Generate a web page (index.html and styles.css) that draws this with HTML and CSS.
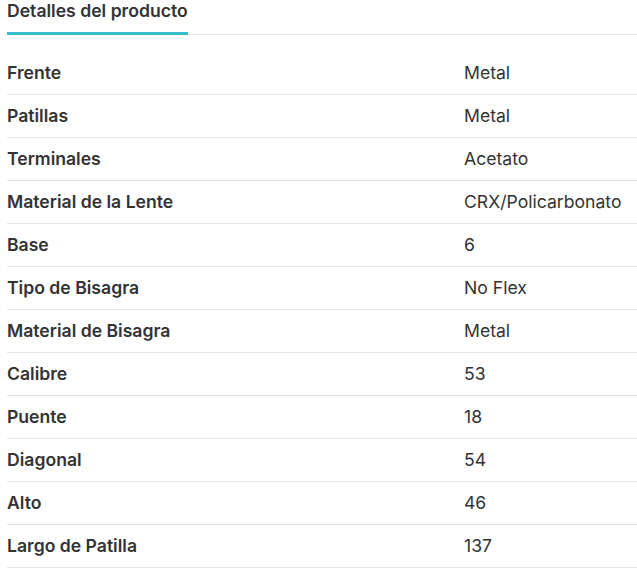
FILE: index.html
```html
<!DOCTYPE html>
<html lang="es">
<head>
<meta charset="utf-8">
<title>Detalles del producto</title>
<link rel="stylesheet" href="styles.css">
</head>
<body>
<div class="details">
  <div class="tabs">
    <div class="tab active">Detalles del producto</div>
  </div>
  <div class="specs">
    <div class="row"><div class="label">Frente</div><div class="value">Metal</div></div>
    <div class="row"><div class="label">Patillas</div><div class="value">Metal</div></div>
    <div class="row"><div class="label">Terminales</div><div class="value">Acetato</div></div>
    <div class="row"><div class="label">Material de la Lente</div><div class="value">CRX/Policarbonato</div></div>
    <div class="row"><div class="label">Base</div><div class="value">6</div></div>
    <div class="row"><div class="label">Tipo de Bisagra</div><div class="value">No Flex</div></div>
    <div class="row"><div class="label">Material de Bisagra</div><div class="value">Metal</div></div>
    <div class="row"><div class="label">Calibre</div><div class="value">53</div></div>
    <div class="row"><div class="label">Puente</div><div class="value">18</div></div>
    <div class="row"><div class="label">Diagonal</div><div class="value">54</div></div>
    <div class="row"><div class="label">Alto</div><div class="value">46</div></div>
    <div class="row"><div class="label">Largo de Patilla</div><div class="value">137</div></div>
  </div>
</div>
</body>
</html>
```
FILE: styles.css
```css
html, body {
  margin: 0;
  padding: 0;
  background: #ffffff;
}
body {
  font-family: Inter, "Noto Sans", sans-serif;
  color: #333333;
}
.details {
  padding-left: 7px;
}
.tabs {
  display: flex;
  border-bottom: 1px solid #e6e6e6;
  margin-bottom: 17px;
}
.tab {
  font-size: 17.6px;
  font-weight: 600;
  line-height: 22px;
  padding-bottom: 10px;
  margin-bottom: -1px;
  border-bottom: 3px solid #38bfcb;
  color: #333333;
}
.row {
  display: grid;
  grid-template-columns: 457px 1fr;
  align-items: center;
  height: 42px;
  border-bottom: 1px solid #e6e6e6;
  font-size: 17.6px;
  line-height: 20px;
}
.label {
  font-weight: 600;
}
.value {
  font-weight: 400;
}
```
